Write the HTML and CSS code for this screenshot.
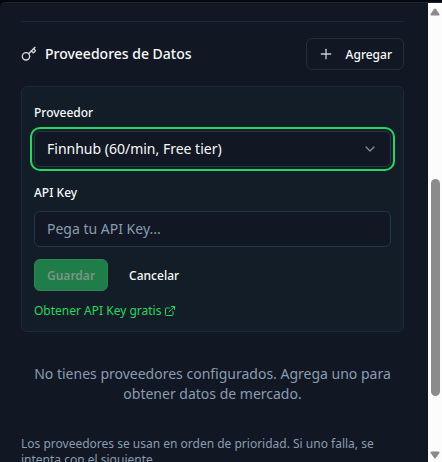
FILE: index.html
```html
<!DOCTYPE html>
<html lang="es">
<head>
  <meta charset="UTF-8">
  <meta name="viewport" content="width=device-width, initial-scale=1.0">
  <title>Proveedores de Datos</title>
  <link rel="stylesheet" href="styles.css">
</head>
<body>
  <div class="dialog">
    <main class="content">
      <section class="providers">
        <header class="section-header">
          <h2 class="section-title">
            <svg class="icon" viewBox="0 0 24 24" width="16" height="16">
              <path d="m15.5 7.5 2.3 2.3a1 1 0 0 0 1.4 0l2.1-2.1a1 1 0 0 0 0-1.4L19 4"/>
              <path d="m21 2-9.6 9.6"/>
              <circle cx="7.5" cy="15.5" r="5.5"/>
            </svg>
            Proveedores de Datos
          </h2>
          <button type="button" class="btn btn-outline">
            <svg class="icon" viewBox="0 0 24 24" width="16" height="16">
              <path d="M5 12h14"/>
              <path d="M12 5v14"/>
            </svg>
            Agregar
          </button>
        </header>

        <form class="card">
          <div class="field">
            <label for="proveedor">Proveedor</label>
            <div class="select-wrap">
              <select id="proveedor" class="control control-active">
                <option>Finnhub (60/min, Free tier)</option>
              </select>
              <svg class="icon chevron" viewBox="0 0 24 24" width="16" height="16">
                <path d="m6 9 6 6 6-6"/>
              </svg>
            </div>
          </div>
          <div class="field">
            <label for="apiKey">API Key</label>
            <input type="text" id="apiKey" class="control" placeholder="Pega tu API Key...">
          </div>
          <div class="actions">
            <button type="submit" class="btn btn-primary" disabled>Guardar</button>
            <button type="button" class="btn btn-ghost">Cancelar</button>
          </div>
          <a class="key-link" href="#">
            Obtener API Key gratis
            <svg class="icon" viewBox="0 0 24 24" width="12" height="12">
              <path d="M15 3h6v6"/>
              <path d="M10 14 21 3"/>
              <path d="M18 13v6a2 2 0 0 1-2 2H5a2 2 0 0 1-2-2V8a2 2 0 0 1 2-2h6"/>
            </svg>
          </a>
        </form>

        <p class="empty">No tienes proveedores configurados. Agrega uno para obtener datos de mercado.</p>
        <p class="note">Los proveedores se usan en orden de prioridad. Si uno falla, se intenta con el siguiente.</p>
      </section>
    </main>

    <div class="scrollbar" aria-hidden="true">
      <svg class="arrow" viewBox="0 0 10 8" width="10" height="8"><path d="M4 1.2Q5 0 6 1.2L9.4 6Q10 7.5 8.5 7.5H1.5Q0 7.5 .6 6Z"/></svg>
      <div class="track"><div class="thumb"></div></div>
      <svg class="arrow" viewBox="0 0 10 8" width="10" height="8"><path d="M4 6.8Q5 8 6 6.8L9.4 2Q10 .5 8.5 .5H1.5Q0 .5 .6 2Z"/></svg>
    </div>
  </div>
</body>
</html>
```
FILE: styles.css
```css
* { box-sizing: border-box; }

body {
  margin: 0;
  height: 100vh;
  padding-top: 2px;
  overflow: hidden;
  background: #05070c;
  color: #f8fafc;
  font-family: "Noto Sans", sans-serif;
  font-size: 14px;
  line-height: 20px;
}

h2, p { margin: 0; }

.icon {
  flex: none;
  fill: none;
  stroke: currentColor;
  stroke-width: 2;
  stroke-linecap: round;
  stroke-linejoin: round;
}

.dialog {
  display: flex;
  height: 100%;
  overflow: hidden;
  background: #111823;
  border-top: 1px solid #1a2633;
  border-top-left-radius: 6px;
}

.content {
  flex: 1;
  min-width: 0;
  padding: 18px 24px 0 21px;
}

.providers {
  padding-top: 16px;
  border-top: 1px solid #1e293b;
}

.section-header {
  display: flex;
  align-items: center;
  justify-content: space-between;
  margin-bottom: 16px;
}

.section-title {
  display: flex;
  align-items: center;
  gap: 8px;
  font-size: 14px;
  font-weight: 500;
}

.section-title .icon { color: #d5d8dd; }

/* Botones */
.btn {
  display: inline-flex;
  align-items: center;
  height: 32px;
  padding: 0 12px;
  border: 1px solid transparent;
  border-radius: 6px;
  background: transparent;
  color: #f8fafc;
  font-family: inherit;
  font-size: 12px;
  font-weight: 500;
  cursor: pointer;
}

.btn-outline {
  gap: 12px;
  padding: 0 11px;
  border-color: #272e3a;
}

.btn-outline .icon { color: #c8cbd0; }

.btn-primary {
  background: #1e7d48;
  border-color: #2b8653;
  color: #7d9486;
  font-weight: 600;
}

/* Formulario */
.card {
  display: flex;
  flex-direction: column;
  gap: 12px;
  padding: 12px;
  background: #121d28;
  border: 1px solid #1e293b;
  border-radius: 6px;
}

.field {
  display: flex;
  flex-direction: column;
  gap: 6px;
}

.field label {
  padding-top: 2px;
  font-size: 12px;
  font-weight: 500;
  line-height: 24px;
}

.select-wrap {
  display: grid;
  align-items: center;
}

.select-wrap > * { grid-area: 1 / 1; }

.control {
  width: 100%;
  height: 36px;
  padding: 0 12px 2px;
  appearance: none;
  background: #111823;
  border: 1px solid #25364b;
  border-radius: 6px;
  color: #f8fafc;
  font-family: inherit;
  font-size: 14px;
}

.control::placeholder {
  color: #8b9bb0;
  opacity: 1;
}

.control-active {
  outline: 2px solid #22d85f;
  outline-offset: 2px;
}

.chevron {
  justify-self: end;
  margin-right: 13px;
  color: #858b94;
  pointer-events: none;
}

.actions {
  display: flex;
  gap: 8px;
}

.key-link {
  display: flex;
  align-items: center;
  align-self: flex-start;
  gap: 3px;
  color: #22d85f;
  font-size: 12px;
  line-height: 16px;
  text-decoration: none;
}

.empty {
  padding: 32px 0;
  color: #8b9bb0;
  text-align: center;
}

.note {
  color: #8b9bb0;
  font-size: 12px;
  line-height: 16px;
}

/* Barra de desplazamiento */
.scrollbar {
  display: flex;
  flex-direction: column;
  align-items: center;
  width: 14px;
  padding: 5px 0 3px;
  background: #fcfcfc;
}

.arrow {
  flex: none;
  fill: #8b8b8b;
}

.track {
  display: flex;
  flex: 1;
  flex-direction: column;
  justify-content: flex-end;
  padding-bottom: 55px;
}

.thumb {
  width: 9px;
  height: 57%;
  border-radius: 5px;
  background: #8b8b8b;
}
```
